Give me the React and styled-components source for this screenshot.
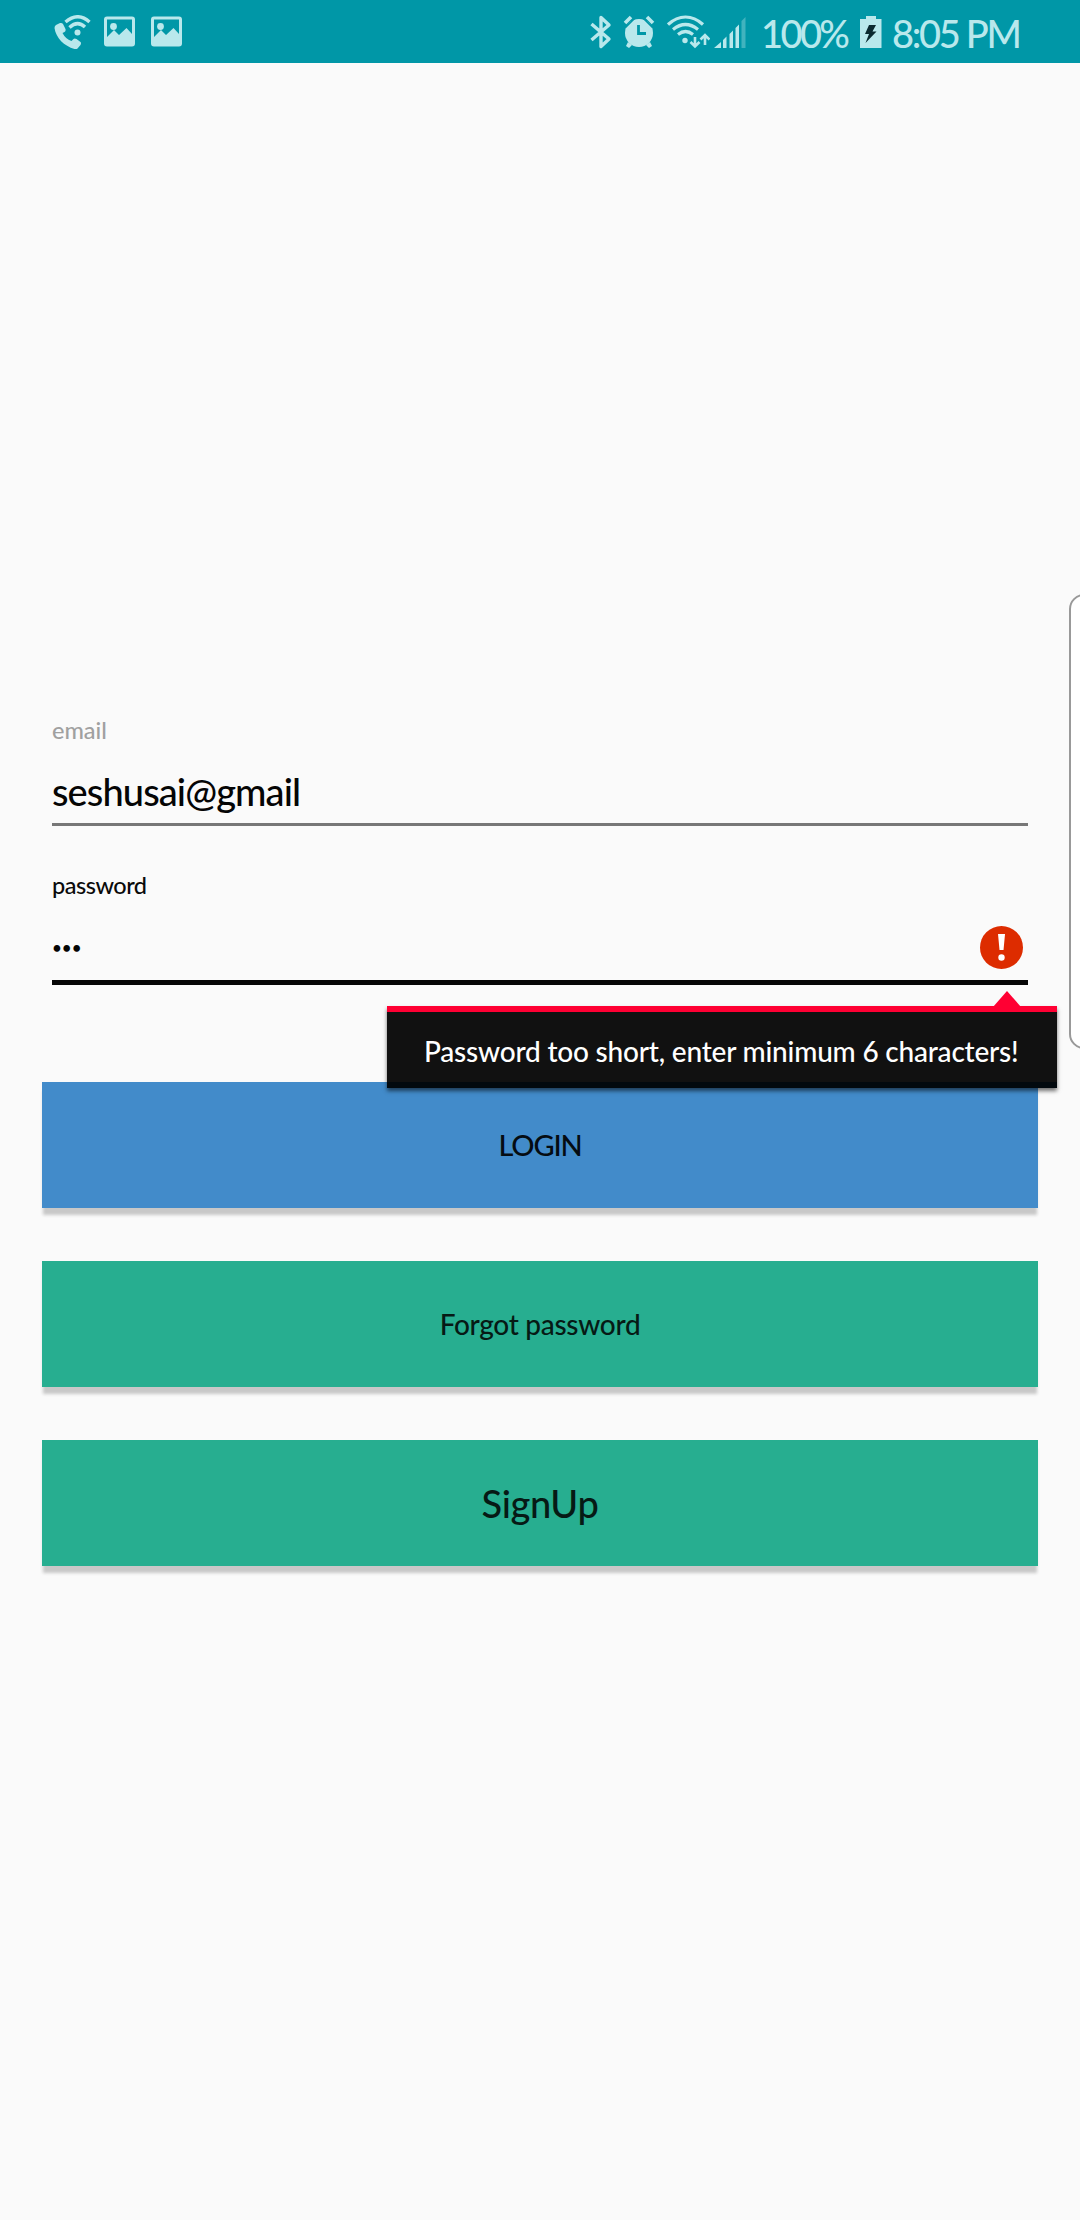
import React from "react";
import styled, { createGlobalStyle } from "styled-components";

const GlobalStyle = createGlobalStyle`
  * { box-sizing: border-box; }
  body { margin: 0; background: #fafafa; }
`;

const Screen = styled.div`
  position: relative;
  width: 1080px;
  height: 2220px;
  overflow: hidden;
  background: #fafafa;
  font-family: Lato, "Open Sans", sans-serif;
  font-weight: 500;
  color: #050505;
`;

const StatusBar = styled.header`
  display: flex;
  align-items: center;
  height: 63px;
  padding: 0 62px 0 54px;
  background: #0097a7;
  color: #b9e8ec;
`;

const StatusGroup = styled.div`
  display: flex;
  align-items: center;
  margin-left: ${(p) => (p.$end ? "auto" : 0)};
`;

const Glyph = styled.svg`
  display: block;
  flex: none;
  width: ${(p) => p.$w}px;
  height: 34px;
  margin-right: ${(p) => p.$gap || 0}px;
  fill: currentColor;
`;

const StatusText = styled.span`
  width: ${(p) => p.$w}px;
  margin-right: ${(p) => p.$gap || 0}px;
  font-size: 38px;
  line-height: 46px;
  letter-spacing: ${(p) => p.$spacing}px;
  white-space: nowrap;
  padding-top: 3px;
`;

const Form = styled.main`
  padding: 652px 42px 0;
`;

const Field = styled.div`
  padding: 0 10px;
  height: ${(p) => p.$h}px;
`;

const Label = styled.div`
  height: 30px;
  font-size: 23.5px;
  line-height: 30px;
  letter-spacing: ${(p) => p.$spacing}px;
  color: ${(p) => (p.$active ? "#0a0a0a" : "#a0a0a0")};
`;

const InputRow = styled.div`
  display: flex;
  justify-content: space-between;
  height: ${(p) => p.$h}px;
  padding: ${(p) => p.$top}px 5px 0 0;
  border-bottom: ${(p) => (p.$active ? "5px solid #060606" : "3px solid #777777")};
`;

const Value = styled.span`
  font-size: 38px;
  line-height: 48px;
  letter-spacing: ${(p) => p.$spacing}px;
`;

const Masked = styled.span`
  font-size: 17px;
  line-height: 44px;
  letter-spacing: ${(p) => p.$spacing}px;
`;

const ErrorIcon = styled.svg`
  display: block;
  width: 43px;
  height: 43px;
`;

const Actions = styled.div`
  display: flex;
  flex-direction: column;
  gap: 53px;
`;

const Button = styled.button`
  height: 126px;
  border: 0;
  padding: 0;
  background: ${(p) => (p.$primary ? "#428bca" : "#27ae90")};
  box-shadow: 0 8px 3px -1px #c8c8c8;
  color: ${(p) => (p.$primary ? "#050c12" : "#061a15")};
  font-family: inherit;
  font-weight: inherit;
  font-size: ${(p) => p.$size}px;
  line-height: 48px;
  letter-spacing: ${(p) => p.$spacing}px;
`;

const ErrorPopup = styled.div`
  position: absolute;
  left: 387px;
  top: 1006px;
  width: 670px;
  height: 82px;
  border-top: 6px solid #ff0033;
  background: linear-gradient(#111111 70px, #02090e 70px);
  box-shadow: 0 3px 4px rgba(0, 0, 0, 0.55);
  padding: 19px 0 0 37px;
  color: #ffffff;
  font-size: 28px;
  line-height: 40px;
  letter-spacing: ${(p) => p.$spacing}px;
  white-space: nowrap;

  &::before {
    content: "";
    position: absolute;
    right: 36px;
    top: -21px;
    border: solid transparent;
    border-width: 0 14px 16px;
    border-bottom-color: #ff0033;
  }
`;

const EdgeHandle = styled.aside`
  position: absolute;
  left: 1069px;
  top: 594px;
  width: 30px;
  height: 455px;
  border: 2px solid #999999;
  border-radius: 16px;
  background: #ffffff;
`;

const PictureIcon = ({ gap }) => (
  <Glyph $w={32} $gap={gap} viewBox="0 0 32 34">
    <path
      fillRule="evenodd"
      d="M3 1.500h25a3 3 0 0 1 3 3v24a3 3 0 0 1-3 3H3a3 3 0 0 1-3-3v-24a3 3 0 0 1 3-3zM3 4.500V22l7-7 5 5 7.500-7 5.500 6V4.500z"
    />
    <circle cx="9.500" cy="11.500" r="3.400" />
  </Glyph>
);

export default function App() {
  return (
    <Screen>
      <GlobalStyle />
      <StatusBar>
        <StatusGroup>
          <Glyph $w={37} $gap={13} viewBox="0 0 37 34">
            <path d="M2 10l4-2q2-.5 3 1l2.500 5q.5 2-1 3l-2 1q3 6 9 8l2-2q1-1 3 0l4 3q1 1 0 3l-3 3.500q-1 1-3 .5C10 31 2 23 .5 13q0-2 1.500-3z" />
            <g fill="none" stroke="currentColor" strokeWidth="3.400">
              <path d="M11.500 7Q24-3.500 35.500 7" />
              <path d="M15.500 12.500q8-7.500 15.500-.5" />
            </g>
            <circle cx="23.500" cy="17.500" r="3" />
          </Glyph>
          <PictureIcon gap={15} />
          <PictureIcon />
        </StatusGroup>
        <StatusGroup $end>
          <Glyph $w={22} $gap={11} viewBox="0 0 22 34">
            <path
              d="M1.500 9L19 24l-8 7.500v-29L19 10 1.500 25"
              fill="none"
              stroke="currentColor"
              strokeWidth="3.400"
              strokeLinejoin="round"
            />
          </Glyph>
          <Glyph $w={32} $gap={12} viewBox="0 0 32 34">
            <path d="M5 27l4 3-3 3-3-2zM27 27l-4 3 3 3 3-2z" />
            <circle cx="16" cy="18" r="14" />
            <path d="M2 8l6-6M30 8l-6-6" stroke="currentColor" strokeWidth="3.600" />
            <path d="M2.500 12.500l9-9M29.500 12.500l-9-9" stroke="#0097a7" strokeWidth="1.600" />
            <path d="M15.500 10v8.500h7.500" fill="none" stroke="#0097a7" strokeWidth="2.800" />
          </Glyph>
          <Glyph $w={43} $gap={4} viewBox="0 0 43 34">
            <g fill="none" stroke="currentColor" strokeWidth="3.200">
              <path d="M1 9.500C12-.5 25-.5 36 9.500" />
              <path d="M6 14.500q12.500-10 25 0" />
              <path d="M11 19.500q7.500-6 15 0" />
              <path d="M28 22v9M23.500 27l4.500 4.500 4.500-4.500M38 30V20M33.500 24.500L38 20l4.500 4.500" strokeWidth="2.600" />
            </g>
            <circle cx="18" cy="25.500" r="2.700" />
          </Glyph>
          <Glyph $w={32} $gap={15} viewBox="0 0 32 34">
            <path d="M0 33l7-6v6zM9 25l3.500-3.500V33H9zM15.500 19l3.500-3.500V33h-3.500zM21.500 13L25 9.500V33h-3.500z" />
            <path opacity=".35" d="M27.500 6L31.500 2v31h-4z" />
          </Glyph>
          <StatusText $w={84} $gap={15} $spacing={-2.6}>100%</StatusText>
          <Glyph $w={22} $gap={10} viewBox="0 0 22 34">
            <path d="M6 1h10v3h5.500v29H0V4h6z" />
            <path d="M9 10h7l-3.500 6.500h4L5.500 28l3.500-9H5z" fill="#0b2a30" />
          </Glyph>
          <StatusText $w={126} $spacing={-2.3}>8:05 PM</StatusText>
        </StatusGroup>
      </StatusBar>

      <Form>
        <Field $h={155}>
          <Label $spacing={0}>email</Label>
          <InputRow $h={81} $top={22}>
            <Value $spacing={-0.9}>seshusai@gmail</Value>
          </InputRow>
        </Field>
        <Field $h={212}>
          <Label $active $spacing={-0.5}>password</Label>
          <InputRow $active $h={85} $top={26}>
            <Masked $spacing={0}>•••</Masked>
            <ErrorIcon viewBox="0 0 43 43">
              <circle cx="21.500" cy="21.500" r="21.500" fill="#dd2c00" />
              <path d="M18 8h7l-1.500 16h-4z" fill="#fff" />
              <circle cx="21.500" cy="31.500" r="3.200" fill="#fff" />
            </ErrorIcon>
          </InputRow>
        </Field>
        <Actions>
          <Button $primary $size={29} $spacing={-1.2}>LOGIN</Button>
          <Button $size={28} $spacing={-0.3}>Forgot password</Button>
          <Button $size={38} $spacing={-0.3}>SignUp</Button>
        </Actions>
      </Form>

      <ErrorPopup $spacing={-0.2}>Password too short, enter minimum 6 characters!</ErrorPopup>
      <EdgeHandle />
    </Screen>
  );
}
